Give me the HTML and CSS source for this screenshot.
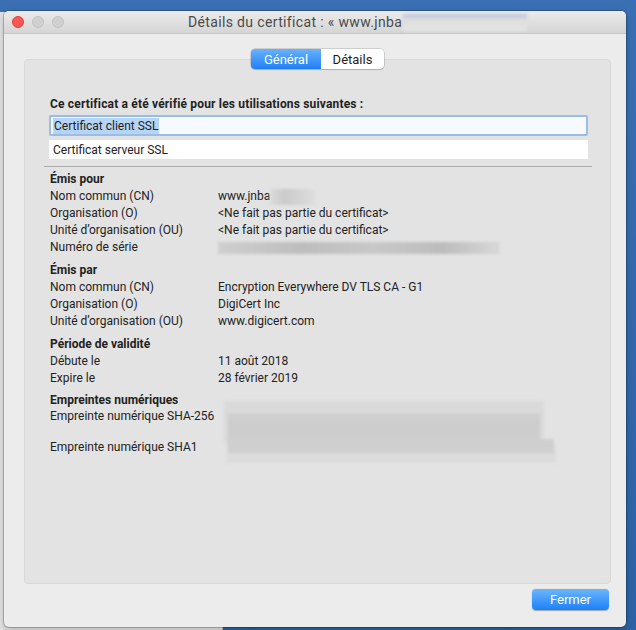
FILE: index.html
```html
<!DOCTYPE html>
<html lang="fr">
<head>
<meta charset="utf-8">
<title>Détails du certificat</title>
<link rel="stylesheet" href="styles.css">
</head>
<body>
<div class="desktop">
  <div class="back-window"></div>
  <div class="window">
    <div class="titlebar">
      <div class="lights">
        <span class="light red"></span>
        <span class="light gray"></span>
        <span class="light gray"></span>
      </div>
      <div class="title">Détails du certificat : « www.jnba<span class="blur title-blur"></span></div>
    </div>
    <div class="window-body">
      <div class="segmented">
        <span class="seg active">Général</span>
        <span class="seg">Détails</span>
      </div>
      <div class="panel">
        <div class="heading">Ce certificat a été vérifié pour les utilisations suivantes :</div>
        <div class="uses">
          <div class="use focused"><span class="sel">Certificat client SSL</span></div>
          <div class="use">Certificat serveur SSL</div>
        </div>
        <div class="separator"></div>

        <div class="section">
          <div class="sec-title">Émis pour</div>
          <div class="row"><span class="label">Nom commun (CN)</span><span class="value">www.jnba<span class="blur cn-blur"></span></span></div>
          <div class="row"><span class="label">Organisation (O)</span><span class="value">&lt;Ne fait pas partie du certificat&gt;</span></div>
          <div class="row"><span class="label">Unité d’organisation (OU)</span><span class="value">&lt;Ne fait pas partie du certificat&gt;</span></div>
          <div class="row"><span class="label">Numéro de série</span><span class="value"><span class="blur serial-blur"></span></span></div>
        </div>

        <div class="section">
          <div class="sec-title">Émis par</div>
          <div class="row"><span class="label">Nom commun (CN)</span><span class="value">Encryption Everywhere DV TLS CA - G1</span></div>
          <div class="row"><span class="label">Organisation (O)</span><span class="value">DigiCert Inc</span></div>
          <div class="row"><span class="label">Unité d’organisation (OU)</span><span class="value">www.digicert.com</span></div>
        </div>

        <div class="section">
          <div class="sec-title">Période de validité</div>
          <div class="row"><span class="label">Débute le</span><span class="value">11 août 2018</span></div>
          <div class="row"><span class="label">Expire le</span><span class="value">28 février 2019</span></div>
        </div>

        <div class="section last">
          <div class="sec-title">Empreintes numériques</div>
          <div class="row sha256"><span class="label">Empreinte numérique SHA-256</span><span class="value"><span class="blur sha-blur-a"></span></span></div>
          <div class="row"><span class="label">Empreinte numérique SHA1</span><span class="value"><span class="blur sha-blur-b"></span></span></div>
        </div>
      </div>
      <div class="actions">
        <button class="btn-primary">Fermer</button>
      </div>
    </div>
  </div>
</div>
</body>
</html>
```

FILE: styles.css
```css
html, body {
  margin: 0;
  padding: 0;
}
body {
  width: 636px;
  height: 630px;
  overflow: hidden;
  background: #2f66ab;
  font-family: "Roboto", "Liberation Sans", sans-serif;
  color: #222;
}
.desktop {
  position: relative;
  width: 636px;
  height: 630px;
  background: linear-gradient(180deg, #3a70b3 0%, #2c62a6 100%);
}
.back-window {
  position: absolute;
  left: 0;
  top: 12px;
  width: 222px;
  height: 618px;
  background: #e2e2e2;
  border-right: 1px solid #b8b8b8;
}
.window {
  position: absolute;
  left: 4px;
  top: 11px;
  width: 622px;
  height: 616px;
  background: #ececec;
  border-radius: 5px;
  box-shadow: 0 0 0 1px rgba(0,0,0,0.18), 0 2px 6px rgba(0,0,0,0.25);
  display: flex;
  flex-direction: column;
  overflow: hidden;
}
.titlebar {
  height: 22px;
  flex: none;
  display: flex;
  align-items: center;
  background: linear-gradient(180deg, #ebebeb 0%, #d5d5d5 100%);
  border-bottom: 1px solid #c6c6c6;
}
.lights {
  display: flex;
  gap: 8px;
  padding-left: 8px;
}
.light {
  width: 12px;
  height: 12px;
  border-radius: 50%;
  box-sizing: border-box;
}
.light.red {
  background: #fc5753;
  border: 1px solid #df3e3a;
}
.light.gray {
  background: #d0d0d0;
  border: 1px solid #c2c2c2;
}
.title {
  margin-left: 124px;
  font-size: 14px;
  letter-spacing: 0.35px;
  color: #4a4a4a;
  display: flex;
  align-items: center;
  white-space: nowrap;
}
.blur {
  display: inline-block;
  filter: blur(1.5px);
}
.title-blur {
  width: 124px;
  height: 17px;
  margin-left: 1px;
  background: linear-gradient(180deg, #b7c5dc 0%, #dedede 35%, #e4e4e4 100%);
}
.window-body {
  flex: 1;
  display: flex;
  flex-direction: column;
  padding: 15px 15px 0 20px;
}
.segmented {
  position: relative;
  z-index: 1;
  align-self: center;
  display: flex;
  height: 20px;
  box-sizing: border-box;
  border-radius: 4px;
  background: #fff;
  box-shadow: 0 0 0 0.5px rgba(0,0,0,0.25), 0 1px 1px rgba(0,0,0,0.12);
  font-size: 13px;
}
.seg {
  display: flex;
  align-items: center;
  justify-content: center;
  color: #1d1d1d;
}
.seg:first-child { width: 70px; }
.seg:last-child { width: 63px; }
.seg.active {
  color: #fff;
  background: linear-gradient(180deg, #69b1fb 0%, #1f80f7 100%);
  border-radius: 4px 0 0 4px;
}
.panel {
  margin-top: -10px;
  height: 525px;
  box-sizing: border-box;
  background: #e3e3e3;
  border: 1px solid #d9d9d9;
  border-radius: 4px;
  padding: 36px 19px 0 25px;
  font-size: 12px;
}
.heading {
  font-weight: bold;
  line-height: 17px;
  letter-spacing: 0.17px;
}
.uses {
  margin: 2px 1px 0 -1px;
  width: 539px;
  display: flex;
  flex-direction: column;
  gap: 4px;
}
.use {
  height: 19px;
  background: #fff;
  display: flex;
  align-items: center;
  padding-left: 4px;
  box-sizing: border-box;
}
.use.focused {
  height: 21px;
  background: #f6fafe;
  border: 2px solid #98bde9;
  border-radius: 2px;
  padding-left: 2px;
}
.sel {
  background: #b5d4f6;
  padding: 1px 1px;
}
.separator {
  margin: 7px -1px 0 -6px;
  height: 1px;
  background: #adadad;
}
.section {
  margin-top: 4px;
}
.section + .section {
  margin-top: 6px;
}
.section.last {
  margin-top: 5px;
}
.sec-title {
  font-weight: bold;
  line-height: 17px;
}
.row {
  display: flex;
  line-height: 17px;
}
.label {
  width: 168px;
  flex: none;
}
.value {
  display: flex;
  align-items: center;
}
.cn-blur {
  width: 46px;
  height: 16px;
  background: linear-gradient(90deg, #dcdcdc 0%, #cbcbcb 30%, #d5d5d5 70%, #dfdfdf 100%);
}
.serial-blur {
  width: 282px;
  height: 12px;
  background: linear-gradient(90deg, #cfcfcf 0%, #bdbdbd 30%, #c8c8c8 55%, #bcbcbc 80%, #d8d8d8 100%);
}
.row.sha256 {
  height: 31px;
  margin-top: -1px;
}
.sha-blur-a {
  margin-left: 10px;
  margin-top: 5px;
  align-self: flex-start;
  width: 312px;
  height: 34px;
  background: linear-gradient(180deg, #d0d0d0 0%, #cccccc 50%, #d1d1d1 100%);
  box-shadow: 0 -8px 0 4px #dadada;
}
.sha-blur-b {
  margin-left: 10px;
  margin-top: -4px;
  width: 326px;
  height: 14px;
  background: #cfcfcf;
  box-shadow: 0 8px 0 2px #dcdcdc;
}
.actions {
  display: flex;
  justify-content: flex-end;
  padding: 5px 2px 0 0;
}
.btn-primary {
  width: 77px;
  height: 21px;
  border: none;
  border-radius: 4px;
  background: linear-gradient(180deg, #6db5fb 0%, #1b81f9 100%);
  box-shadow: 0 0.5px 1px rgba(0,0,0,0.3);
  color: #fff;
  font-family: "Roboto", "Liberation Sans", sans-serif;
  font-size: 13px;
  padding: 0;
}
```
